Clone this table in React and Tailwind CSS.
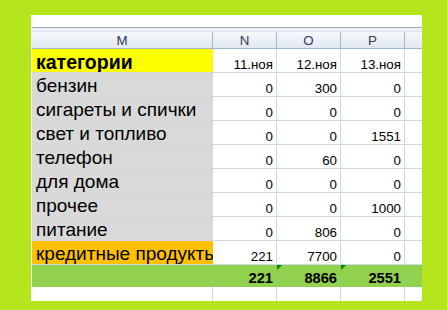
import React from "react";

const rows = [
  ["бензин", "0", "300", "0"],
  ["сигареты и спички", "0", "0", "0"],
  ["свет и топливо", "0", "0", "1551"],
  ["телефон", "0", "60", "0"],
  ["для дома", "0", "0", "0"],
  ["прочее", "0", "0", "1000"],
  ["питание", "0", "806", "0"],
];

function NumCell({ v }) {
  return (
    <div className="w-[64px] h-full shrink-0 border-r border-[#d0d7e5] flex items-end justify-end pr-[3px] pb-[1px] text-[13.33px] leading-[13px] text-black">
      {v}
    </div>
  );
}

function TotalCell({ v, mark }) {
  return (
    <div className="relative w-[64px] shrink-0 h-full flex items-end justify-end pr-[4px] pb-[2px] text-[14.67px] leading-[14px] font-bold text-black">
      {mark && (
        <span className="absolute left-0 top-0 w-0 h-0 border-t-[5px] border-r-[5px] border-t-[#008000] border-r-transparent" />
      )}
      {v}
    </div>
  );
}

function Row({ label, labelBg, n, o, p, boldLabel }) {
  return (
    <div className="flex h-[24px] shrink-0 border-b border-[#d0d7e5]">
      <div
        className={`w-[181px] shrink-0 h-full overflow-hidden whitespace-nowrap flex items-end pl-[4px] text-black ${labelBg} ${
          boldLabel ? "font-bold text-[19.5px] leading-[20px] pb-[0px]" : "text-[19px] leading-[20px] pb-[0px]"
        }`}
      >
        {label}
      </div>
      <NumCell v={n} />
      <NumCell v={o} />
      <NumCell v={p} />
      <div className="w-[17px] shrink-0 h-full" />
    </div>
  );
}

export default function App() {
  return (
    <div
      className="w-[447px] h-[310px] bg-[#b5e61d] pt-[15px] pl-[31px] overflow-hidden"
      style={{ fontFamily: '"Liberation Sans", Arial, sans-serif' }}
    >
      <div className="w-[391px] h-[286px] bg-white pl-[1px] overflow-hidden flex flex-col">
        <div className="h-[13px] shrink-0 bg-white border-b border-[#9aaec6]" />
        <div className="h-[4px] shrink-0 bg-[#eef2f8] border-b border-[#dbe3ee]" />
        <div className="flex h-[17px] shrink-0 border-b border-[#9eb6ce] bg-gradient-to-b from-[#f6f8fc] to-[#e1e8f2] text-[13.33px] leading-[17px] text-[#2f3d52]">
          <div className="w-[181px] shrink-0 border-r border-[#9eb6ce] text-center">M</div>
          <div className="w-[64px] shrink-0 border-r border-[#9eb6ce] text-center">N</div>
          <div className="w-[64px] shrink-0 border-r border-[#9eb6ce] text-center">O</div>
          <div className="w-[64px] shrink-0 border-r border-[#9eb6ce] text-center">P</div>
          <div className="w-[17px] shrink-0" />
        </div>
        <Row label="категории" labelBg="bg-[#ffff00]" n="11.ноя" o="12.ноя" p="13.ноя" boldLabel />
        {rows.map((r) => (
          <Row key={r[0]} label={r[0]} labelBg="bg-[#d9d9d9]" n={r[1]} o={r[2]} p={r[3]} />
        ))}
        <Row label="кредитные продукты" labelBg="bg-[#ffc000]" n="221" o="7700" p="0" />
        <div className="flex h-[22px] shrink-0 bg-[#92d050]">
          <div className="w-[181px] shrink-0" />
          <TotalCell v="221" />
          <TotalCell v="8866" mark />
          <TotalCell v="2551" mark />
        </div>
        <div className="flex flex-1">
          <div className="w-[181px] shrink-0 border-r border-[#d0d7e5]" />
          <div className="w-[64px] shrink-0 border-r border-[#d0d7e5]" />
          <div className="w-[64px] shrink-0 border-r border-[#d0d7e5]" />
          <div className="w-[64px] shrink-0 border-r border-[#d0d7e5]" />
        </div>
      </div>
    </div>
  );
}
